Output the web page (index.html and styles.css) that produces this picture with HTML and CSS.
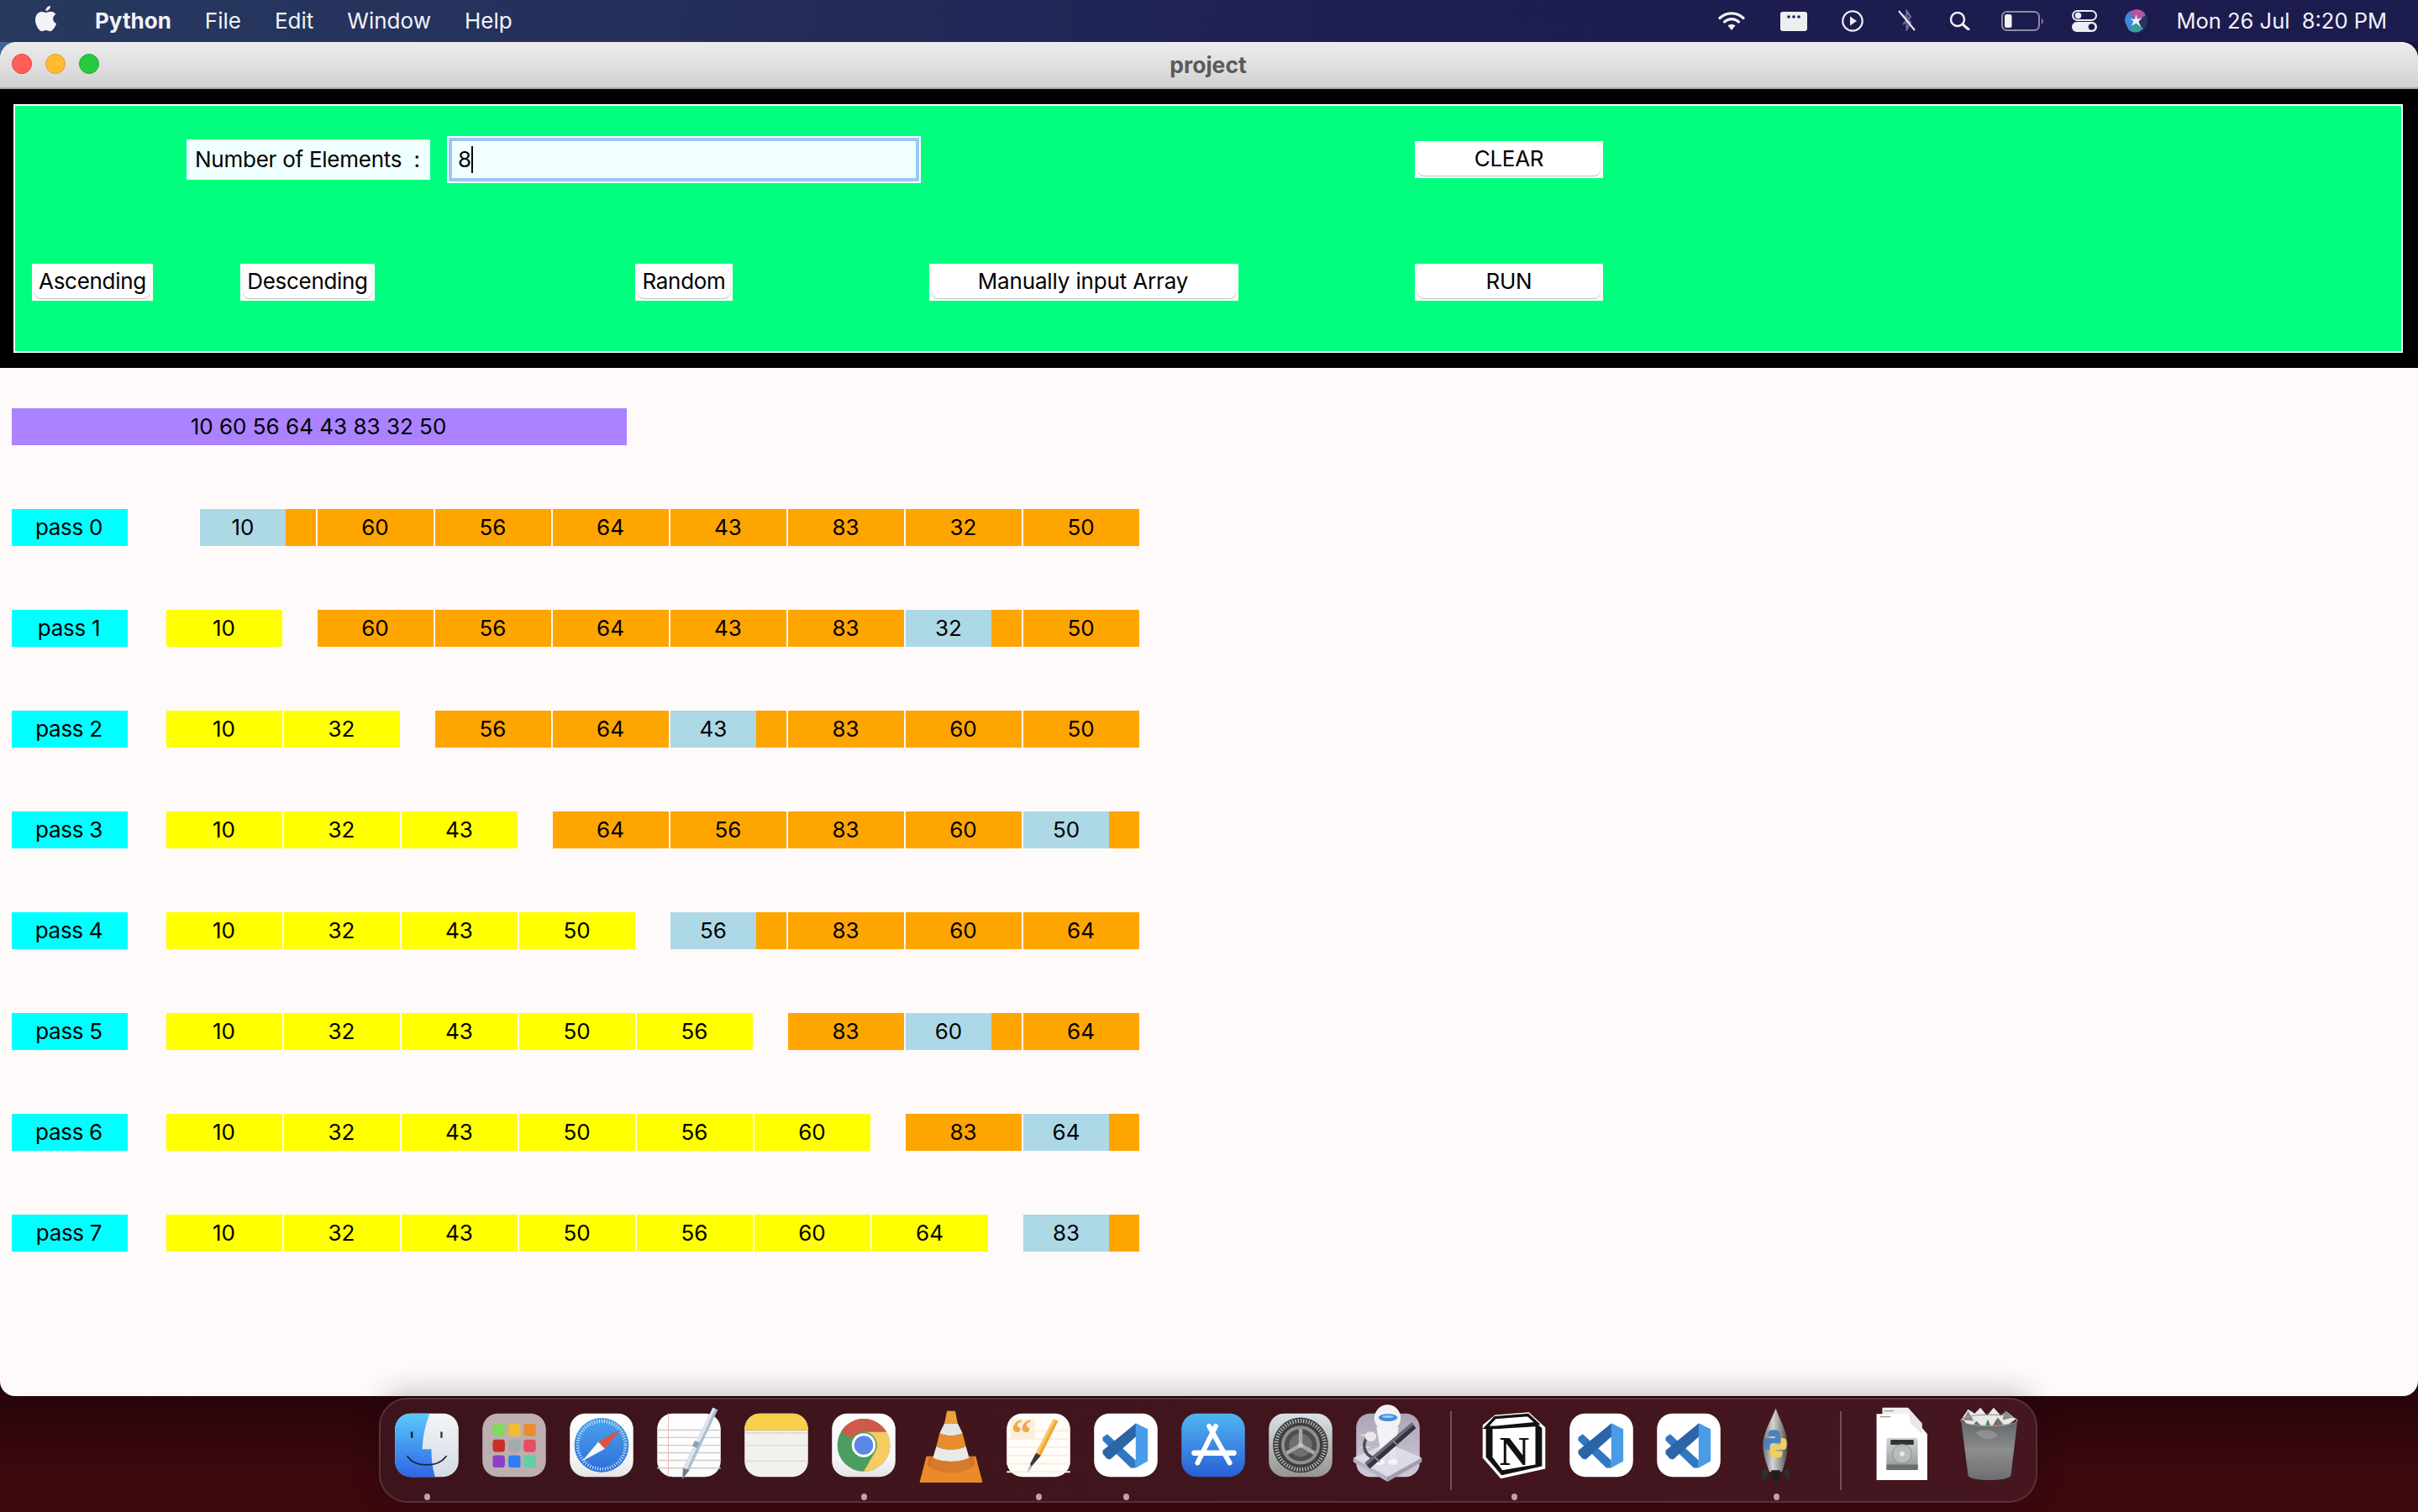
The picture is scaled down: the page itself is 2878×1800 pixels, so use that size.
FILE: index.html
```html
<!DOCTYPE html>
<html lang="en">
<head>
<meta charset="utf-8">
<title>project</title>
<link rel="stylesheet" href="styles.css">
</head>
<body>
<svg class="defs" width="0" height="0" aria-hidden="true">
  <defs>
    <linearGradient id="gFinderL" x1="0" y1="0" x2="0" y2="1"><stop offset="0" stop-color="#5ac8fb"/><stop offset="1" stop-color="#2f66e6"/></linearGradient>
    <linearGradient id="gFinderR" x1="0" y1="0" x2="0" y2="1"><stop offset="0" stop-color="#f3f5f7"/><stop offset="1" stop-color="#d3dbe6"/></linearGradient>
    <linearGradient id="gTile" x1="0" y1="0" x2="0" y2="1"><stop offset="0" stop-color="#ffffff"/><stop offset=".7" stop-color="#f6f6f6"/><stop offset="1" stop-color="#e4e4e4"/></linearGradient>
    <linearGradient id="gSafari" x1="0" y1="0" x2="0" y2="1"><stop offset="0" stop-color="#4aa3ee"/><stop offset="1" stop-color="#2d6fd8"/></linearGradient>
    <linearGradient id="gApp" x1="0" y1="0" x2="0" y2="1"><stop offset="0" stop-color="#4fb6f1"/><stop offset="1" stop-color="#2a5fd6"/></linearGradient>
    <linearGradient id="gPrefs" x1="0" y1="0" x2="0" y2="1"><stop offset="0" stop-color="#d9e2e6"/><stop offset="1" stop-color="#96958f"/></linearGradient>
    <linearGradient id="gAuto" x1="0" y1="0" x2="0" y2="1"><stop offset="0" stop-color="#aba5b6"/><stop offset="1" stop-color="#cfcad8"/></linearGradient>
    <linearGradient id="gRocket" x1="0" y1="0" x2="1" y2="0"><stop offset="0" stop-color="#6d6d6d"/><stop offset=".4" stop-color="#d5d5d5"/><stop offset=".75" stop-color="#8a8a8a"/><stop offset="1" stop-color="#4a4a4a"/></linearGradient>
    <linearGradient id="gTrash" x1="0" y1="0" x2="0" y2="1"><stop offset="0" stop-color="#65686a"/><stop offset=".5" stop-color="#8b8d8e"/><stop offset="1" stop-color="#6c6e70"/></linearGradient>
    <linearGradient id="gHdd" x1="0" y1="0" x2="0" y2="1"><stop offset="0" stop-color="#d2d5d5"/><stop offset="1" stop-color="#8f9494"/></linearGradient>
    <symbol id="vscode" viewBox="0 0 104 106">
      <rect x="13.5" y="19" width="77" height="77" rx="19" fill="#fff"/>
      <path d="M29.5 44 L64 76 V85 L58 85 L24 52 V48 Z" fill="#3277c2"/>
      <path d="M64 31 L70 34 V42 L33 75 L29 74 L24 68 V64 Z" fill="#2b65a8"/>
      <path d="M64 31 L78.6 38 V77 L64 85 Z" fill="#4a9be8"/>
    </symbol>
  </defs>
</svg>

<header class="menubar">
  <svg class="apple" width="26" height="31" viewBox="0 0 26 31"><path fill="#f2f3f6" d="M18 0c.3 3-2.600 6.200-5.600 6 -.4-3 2.800-6 5.600-6zM13 8c1.500 0 3-1.200 5.300-1.200 2.200 0 4.500 1.100 6 3.300-4.700 2.700-3.900 9.300.9 11-1.500 4-4.500 9.200-7.500 9.200-1.900 0-2.700-1.200-4.900-1.200-2.300 0-3.100 1.200-4.800 1.200C4.700 30.300 0 23 0 16.700 0 10.700 3.700 7 7.500 7 9.800 7 11.500 8 13 8z"/></svg>
  <span class="mi mi-app">Python</span>
  <span class="mi">File</span>
  <span class="mi">Edit</span>
  <span class="mi">Window</span>
  <span class="mi">Help</span>
  <div class="status">
    <svg class="s-wifi" width="32" height="24" viewBox="0 0 32 24"><g fill="none" stroke="#f2f3f6" stroke-width="3.200" stroke-linecap="round"><path d="M2 8.500C10 1 22 1 30 8.500"/><path d="M7.500 13C12.500 8.500 19.500 8.500 24.500 13"/></g><path d="M11.500 17.500C14 15.500 18 15.500 20.500 17.500L16 23Z" fill="#f2f3f6"/></svg>
    <svg class="s-cal" width="32" height="23" viewBox="0 0 32 23"><rect width="32" height="23" rx="3" fill="#eceef2"/><circle cx="10" cy="6" r="1.800" fill="#1c1b4e"/><circle cx="16" cy="6" r="1.800" fill="#1c1b4e"/><circle cx="22" cy="6" r="1.800" fill="#1c1b4e"/></svg>
    <svg class="s-play" width="26" height="26" viewBox="0 0 26 26"><circle cx="13" cy="13" r="11.700" fill="none" stroke="#eceef2" stroke-width="2.200"/><path d="M10 7.500L18 13L10 18.500Z" fill="#eceef2"/></svg>
    <svg class="s-bt" width="23" height="26" viewBox="0 0 23 26"><path d="M7 6.500L16 16L11.500 24V2L16 9L7 18" fill="none" stroke="#72718f" stroke-width="2.200"/><path d="M2 2L21 25" stroke="#eceef2" stroke-width="2"/></svg>
    <svg class="s-search" width="25" height="22" viewBox="0 0 25 22"><circle cx="10" cy="9" r="8" fill="none" stroke="#f2f3f6" stroke-width="2.400"/><path d="M16 15L23 21" stroke="#f2f3f6" stroke-width="3" stroke-linecap="round"/></svg>
    <svg class="s-batt" width="51" height="24" viewBox="0 0 51 24"><rect x="1" y="1" width="44" height="22" rx="5.500" fill="none" stroke="#8d8ca4" stroke-width="2"/><rect x="4" y="4" width="8.500" height="16" rx="2.500" fill="#f2f3f6"/><path d="M48 8.500C50 10 50.500 14 48 16Z" fill="#8d8ca4"/></svg>
    <svg class="s-cc" width="30" height="26" viewBox="0 0 30 26"><rect x="1" y="1" width="28" height="11" rx="5.500" fill="none" stroke="#eceef2" stroke-width="2"/><circle cx="7.500" cy="6.500" r="3.800" fill="#eceef2"/><rect y="14" width="30" height="12" rx="6" fill="#eceef2"/><circle cx="23.500" cy="20" r="3.800" fill="#1c1b4e"/></svg>
    <svg class="s-siri" width="27" height="28" viewBox="0 0 27 28"><ellipse cx="13.500" cy="14" rx="13.500" ry="14" fill="#27345f"/><path d="M13.500 0A13.500 14 0 0 1 25 7L13.500 14L5 3Z" fill="#b4559f"/><path d="M0 14A13.500 14 0 0 1 5 3L13.500 14L5 25Z" fill="#3f8ad8"/><path d="M5 25L13.500 14L22 23Q14 31 5 25Z" fill="#3a9b9e"/><path d="M13.500 6L15 12L21 10L16.500 14.500L19 21L13.500 16.500L8 20L10.500 14L6 11.500L12 12Z" fill="#fff" opacity=".92"/></svg>
    <span class="clock">Mon 26 Jul&nbsp; 8:20 PM</span>
  </div>
</header>

<main class="window">
  <div class="titlebar">
    <span class="light light-red"></span>
    <span class="light light-yellow"></span>
    <span class="light light-green"></span>
    <span class="title">project</span>
  </div>

  <section class="band">
    <div class="panel">
      <div class="ctl-row ctl-row-top">
        <label class="num-label">Number of Elements&nbsp; :</label>
        <div class="entry"><span class="entry-text">8</span><span class="caret"></span></div>
        <div class="btn btn-clear"><span>CLEAR</span></div>
      </div>
      <div class="ctl-row ctl-row-bottom">
        <div class="btn btn-asc"><span>Ascending</span></div>
        <div class="btn btn-desc"><span>Descending</span></div>
        <div class="btn btn-rand"><span>Random</span></div>
        <div class="btn btn-man"><span>Manually input Array</span></div>
        <div class="btn btn-run"><span>RUN</span></div>
      </div>
    </div>
  </section>

  <section class="content">
    <div class="array-bar">10 60 56 64 43 83 32 50</div>

    <div class="row"><div class="pass">pass 0</div><div class="rest">
      <div class="cell or"><b class="sw">10</b></div><div class="cell or">60</div><div class="cell or">56</div><div class="cell or">64</div><div class="cell or">43</div><div class="cell or">83</div><div class="cell or">32</div><div class="cell or">50</div>
    </div></div>

    <div class="row"><div class="pass">pass 1</div><div class="cell ye">10</div><div class="rest">
      <div class="cell or">60</div><div class="cell or">56</div><div class="cell or">64</div><div class="cell or">43</div><div class="cell or">83</div><div class="cell or"><b class="sw">32</b></div><div class="cell or">50</div>
    </div></div>

    <div class="row"><div class="pass">pass 2</div><div class="cell ye">10</div><div class="cell ye">32</div><div class="rest">
      <div class="cell or">56</div><div class="cell or">64</div><div class="cell or"><b class="sw">43</b></div><div class="cell or">83</div><div class="cell or">60</div><div class="cell or">50</div>
    </div></div>

    <div class="row"><div class="pass">pass 3</div><div class="cell ye">10</div><div class="cell ye">32</div><div class="cell ye">43</div><div class="rest">
      <div class="cell or">64</div><div class="cell or">56</div><div class="cell or">83</div><div class="cell or">60</div><div class="cell or"><b class="sw">50</b></div>
    </div></div>

    <div class="row"><div class="pass">pass 4</div><div class="cell ye">10</div><div class="cell ye">32</div><div class="cell ye">43</div><div class="cell ye">50</div><div class="rest">
      <div class="cell or"><b class="sw">56</b></div><div class="cell or">83</div><div class="cell or">60</div><div class="cell or">64</div>
    </div></div>

    <div class="row"><div class="pass">pass 5</div><div class="cell ye">10</div><div class="cell ye">32</div><div class="cell ye">43</div><div class="cell ye">50</div><div class="cell ye">56</div><div class="rest">
      <div class="cell or">83</div><div class="cell or"><b class="sw">60</b></div><div class="cell or">64</div>
    </div></div>

    <div class="row"><div class="pass">pass 6</div><div class="cell ye">10</div><div class="cell ye">32</div><div class="cell ye">43</div><div class="cell ye">50</div><div class="cell ye">56</div><div class="cell ye">60</div><div class="rest">
      <div class="cell or">83</div><div class="cell or"><b class="sw">64</b></div>
    </div></div>

    <div class="row"><div class="pass">pass 7</div><div class="cell ye">10</div><div class="cell ye">32</div><div class="cell ye">43</div><div class="cell ye">50</div><div class="cell ye">56</div><div class="cell ye">60</div><div class="cell ye">64</div><div class="rest">
      <div class="cell or"><b class="sw">83</b></div>
    </div></div>
  </section>
</main>

<nav class="dock">
  <!-- Finder -->
  <div class="slot"><svg class="ic" viewBox="0 0 104 106"><rect x="13.5" y="19" width="77" height="77" rx="19" fill="url(#gFinderR)"/><path d="M32 19H55.500C50 33 47 48 46.500 62.500H57.500C57.500 74 59 86 62 96H32.500A19 19 0 0 1 13.500 77V38A19 19 0 0 1 32 19Z" fill="url(#gFinderL)"/><rect x="32.500" y="41" width="2.600" height="8" rx="1.300" fill="#16263f"/><rect x="68.500" y="41" width="2.600" height="8" rx="1.300" fill="#3a4450"/><path d="M28.500 71C38 85 65 85 75.500 71" fill="none" stroke="#1c2433" stroke-width="1.800" stroke-linecap="round"/></svg><i class="dot"></i></div>
  <!-- Launchpad -->
  <div class="slot"><svg class="ic" viewBox="0 0 104 106"><rect x="13.5" y="19" width="77" height="77" rx="19" fill="#bdaeb0"/><rect x="26" y="31.700" width="14.700" height="15" rx="3.500" fill="#82da5c"/><rect x="45" y="31.700" width="14.700" height="15" rx="3.500" fill="#f3bd33"/><rect x="63.500" y="31.700" width="14.700" height="15" rx="3.500" fill="#e98d2e"/><rect x="26" y="50.700" width="14.700" height="15" rx="3.500" fill="#c8302a"/><rect x="45" y="50.700" width="14.700" height="15" rx="3.500" fill="#a5a9aa"/><rect x="63.500" y="50.700" width="14.700" height="15" rx="3.500" fill="#e64c64"/><rect x="26" y="69.700" width="14.700" height="15" rx="3.500" fill="#8b40c4"/><rect x="45" y="69.700" width="14.700" height="15" rx="3.500" fill="#2f7df1"/><rect x="63.500" y="69.700" width="14.700" height="15" rx="3.500" fill="#5fcfa6"/></svg></div>
  <!-- Safari -->
  <div class="slot"><svg class="ic" viewBox="0 0 104 106"><rect x="13.5" y="19" width="77" height="77" rx="19" fill="url(#gTile)"/><circle cx="52" cy="57.500" r="33" fill="url(#gSafari)"/><circle cx="52" cy="57.500" r="29" fill="none" stroke="#e6f1ff" stroke-width="4" stroke-dasharray="1 2.100"/><path d="M75 38.500L56 62L48 53.500Z" fill="#e5503c"/><path d="M28.500 77L48 53.500L56 62Z" fill="#f6f6f6"/></svg></div>
  <!-- TextEdit -->
  <div class="slot"><svg class="ic" viewBox="0 0 104 106"><rect x="13.5" y="19" width="77" height="77" rx="19" fill="#fdfdfd"/><path d="M13.500 39.300H90.500M13.500 48.300H90.500M13.500 57.700H90.500M13.500 66.700H90.500M13.500 76H90.500M13.500 85.300H90.500" stroke="#cfcbcb" stroke-width="1.500"/><path d="M27 19V96" stroke="#f2b5b8" stroke-width="1"/><path d="M81 12L87 14.500L52.500 88L44 98.500L45 85Z" fill="#a9bdd2"/><path d="M81 12L84 13.300L49 88L44 98.500L45 85Z" fill="#dbe5ef"/><path d="M45 85L52.500 88L44 98.500Z" fill="#6e7a86"/><path d="M59 52L65 54.500L62 61L56 58.500Z" fill="#8da1b6"/></svg></div>
  <!-- Notes -->
  <div class="slot"><svg class="ic" viewBox="0 0 104 106"><rect x="13.5" y="19" width="77" height="77" rx="19" fill="#f3f1ee"/><path d="M13.500 39.300V38A19 19 0 0 1 32.500 19H71.500A19 19 0 0 1 90.500 38V39.300Z" fill="#f6cf4d"/><path d="M13.500 39.300H90.500" stroke="#d9b84a" stroke-width="1"/><path d="M14 42.500H90" stroke="#c4c1bc" stroke-width="2" stroke-dasharray="1 1.200"/><path d="M13.500 57.700H90.500M13.500 77H90.500" stroke="#dcd9d6" stroke-width="1.500"/></svg></div>
  <!-- Chrome -->
  <div class="slot"><svg class="ic" viewBox="0 0 104 106"><rect x="13.5" y="19" width="77" height="77" rx="19" fill="url(#gTile)"/><circle cx="52" cy="57.500" r="32" fill="#4b9e5f"/><path d="M24.300 41.500A32 32 0 0 1 79.700 41.500H52A16 16 0 0 0 38 49.500Z" fill="#cd5a4a"/><path d="M79.700 41.500A32 32 0 0 1 52 89.500L66 65.500A16 16 0 0 0 66 49.500 16 16 0 0 0 52 41.500Z" fill="#f6cb60"/><circle cx="52" cy="57.500" r="14.500" fill="#fff"/><circle cx="52" cy="57.500" r="11.500" fill="#5b88e8"/></svg><i class="dot"></i></div>
  <!-- VLC -->
  <div class="slot"><svg class="ic" viewBox="0 0 104 106"><path d="M22 71L14 102A1 1 0 0 0 15 103H89A1 1 0 0 0 90 102L82 71Z" fill="#e98a2b"/><path d="M23 80C30 94 74 94 81 80L78 71H26Z" fill="#cf7127"/><path d="M47 16H57L60 31H44Z" fill="#eda235"/><path d="M44 31H60L66 43C58 47 46 47 38 43Z" fill="#e6e6e2"/><path d="M38 43C46 47 58 47 66 43L70 59C60 64 44 64 34 59Z" fill="#e68e2f"/><path d="M34 59C44 64 60 64 70 59L74 73C63 79 41 79 30 73Z" fill="#e9e9e5"/><path d="M30 73C41 79 63 79 74 73L77 84C65 92 39 92 27 84Z" fill="#d77a2a"/></svg></div>
  <!-- Pages-like -->
  <div class="slot"><svg class="ic" viewBox="0 0 104 106"><rect x="13.5" y="19" width="77" height="77" rx="19" fill="#fffdf9"/><path d="M13.500 40H90.500M13.500 50H90.500M13.500 60H90.500M13.500 70H90.500M13.500 80H90.500M13.500 90H90.500" stroke="#fbeedd" stroke-width="2"/><rect x="18" y="26" width="30" height="24" fill="#fbefdc"/><text class="quote" x="19" y="60">“</text><path d="M70 26L76 28L55 70L49 67Z" fill="#f0a72e"/><path d="M70 26L73 27L52 68.500L49 67Z" fill="#f8c766"/><path d="M49 67L55 70L43 84L42 80Z" fill="#3a3a3a"/><path d="M42 80L44 85L38 91Z" fill="#bbb"/></svg><i class="dot"></i></div>
  <!-- VS Code -->
  <div class="slot"><svg class="ic"><use href="#vscode"/></svg><i class="dot"></i></div>
  <!-- App Store -->
  <div class="slot"><svg class="ic" viewBox="0 0 104 106"><rect x="13.5" y="19" width="77" height="77" rx="19" fill="url(#gApp)"/><path d="M55 34.500L33 79" stroke="#fff" stroke-width="6" stroke-linecap="round"/><path d="M47 34.500L72 79" stroke="#fff" stroke-width="6" stroke-linecap="round"/><path d="M29 67H77" stroke="#fff" stroke-width="6.500" stroke-linecap="round"/></svg></div>
  <!-- System Preferences -->
  <div class="slot"><svg class="ic" viewBox="0 0 104 106"><rect x="13.5" y="19" width="77" height="77" rx="19" fill="url(#gPrefs)"/><circle cx="52" cy="57.500" r="33.500" fill="#3c3c3c"/><circle cx="52" cy="57.500" r="29.500" fill="none" stroke="#bdbdbd" stroke-width="5" stroke-dasharray="1.400 1.900"/><circle cx="52" cy="57.500" r="25.500" fill="#3f3f3f"/><circle cx="52" cy="57.500" r="23.500" fill="#8f8f8f"/><circle cx="52" cy="57.500" r="19.500" fill="#4e4e4e"/><circle cx="52" cy="57.500" r="14" fill="#6e6e6e"/><path d="M52 57.500V38M52 57.500L35 67.300M52 57.500L69 67.300" stroke="#a8a8a8" stroke-width="4.500"/><circle cx="52" cy="57.500" r="3" fill="#c6c6c6"/></svg></div>
  <!-- Automator -->
  <div class="slot"><svg class="ic" viewBox="0 0 104 106"><rect x="13.5" y="19" width="77" height="77" rx="17" fill="url(#gAuto)"/><path d="M19 45H30M19 60H30" stroke="#d9d6e0" stroke-width="2"/><path d="M10 73L51.500 96L93 73L51.500 55Z" fill="#dedbe6"/><path d="M10 73L51.500 96V102L10 78Z" fill="#b7b3c2"/><path d="M93 73L51.500 96V102L93 78Z" fill="#a29eae"/><path d="M28 46C20 56 22 68 34 73" fill="none" stroke="#4c4a55" stroke-width="3.500"/><path d="M38 36H65L60 64H43Z" fill="#f3f3f5"/><path d="M42 62H50V76H42ZM54 62H62V76H54Z" fill="#e4e4e8"/><ellipse cx="42" cy="78" rx="6" ry="3.500" fill="#f5f5f7"/><ellipse cx="58" cy="78" rx="6" ry="3.500" fill="#f5f5f7"/><circle cx="51.500" cy="24.500" r="16" fill="#f2f2f4"/><ellipse cx="52" cy="24" rx="11.500" ry="4.500" fill="#3f8ee2"/><ellipse cx="52" cy="23" rx="7" ry="1.500" fill="#a9d2f8"/><ellipse cx="31" cy="47" rx="7" ry="6" fill="#e9e9ec"/><path d="M81 30L86 37L30 86L24 79Z" fill="#34333e"/><path d="M81 30L83 33L26 82L24 79Z" fill="#6a6980"/><path d="M58 52L64 58M36 72L42 78" stroke="#8a8996" stroke-width="2"/></svg></div>
  <div class="sep"></div>
  <!-- Notion -->
  <div class="slot"><svg class="ic" viewBox="0 0 104 106"><path d="M29 21L70 17.500L90 36V86L36 98L14 73V33Z" fill="#fff"/><path d="M29 24L69 21L86 37V83L37 94L18 72V35Z" fill="#111"/><path d="M26 38L78 35V81L38 88L26 72Z" fill="#fff"/><path d="M18 36L29 24L69 21L80 31L30 36Z" fill="#fff" stroke="#111" stroke-width="3.500"/><text class="notion-n" x="52.500" y="82" text-anchor="middle">N</text></svg><i class="dot"></i></div>
  <div class="slot"><svg class="ic"><use href="#vscode"/></svg></div>
  <div class="slot"><svg class="ic"><use href="#vscode"/></svg></div>
  <!-- Python launcher -->
  <div class="slot"><svg class="ic" viewBox="0 0 104 106"><path d="M38 84C32 92 35 100 36 103L44 90ZM65 84C70 92 68 100 67 103L60 90Z" fill="#2d2d2f"/><path d="M51.500 13C58 30 66 42 66 58C66 70 62 82 59 90H44C41 82 36 70 36 58C36 42 45 30 51.500 13Z" fill="url(#gRocket)"/><path d="M46 88H57L56 101H47Z" fill="#1f1f20"/><path d="M50 39C44 39 42.500 41 42.500 44V47H51V49H41C38 49 37 53 37 56C37 60 38.500 63 41 63H44V59C44 56.500 46 55 48 55H54C56 55 57 53.500 57 51.500V44C57 41 54 39 50 39Z" fill="#4a82bc"/><path d="M52 73C58 73 59.500 71 59.500 68V65H51V63H61C64 63 65 59 65 56C65 52 63.500 49 61 49H58V53C58 55.500 56 57 54 57H48C46 57 45 58.500 45 60.500V68C45 71 48 73 52 73Z" fill="#f2cf5f"/></svg><i class="dot"></i></div>
  <div class="sep sep-b"></div>
  <!-- Document -->
  <div class="slot"><svg class="ic" viewBox="0 0 104 106"><path d="M28 12H59L76 31V60H28Z" fill="#f0f0f0"/><path d="M21 19.500H62L82.500 44V100H21Z" fill="#fff"/><path d="M59 12L76 31L76 44C70 38 66 34 62 31Z" fill="#e7e7e7"/><path d="M30 16H42M25 23H38" stroke="#999" stroke-width="1.200"/><rect x="33" y="48.700" width="38" height="39" rx="2.500" fill="url(#gHdd)"/><rect x="38" y="51" width="28" height="6" fill="#333"/><circle cx="52" cy="68" r="11.500" fill="#b9bdbd" stroke="#8b8f8f"/><circle cx="52" cy="68" r="3" fill="#e6e8e8"/><rect x="33" y="81" width="38" height="6.700" fill="#6b6e6e"/></svg></div>
  <!-- Trash -->
  <div class="slot"><svg class="ic" viewBox="0 0 104 106"><path d="M18 26L26 14L34 19L41 12L49 22L57 12L66 22L72 16L84 26L70 36H30Z" fill="#e9e9e9"/><path d="M36 28L44 36H30ZM62 24L70 34H56ZM50 26L54 36H46Z" fill="#5d7f6c"/><path d="M60 27L64 36H55Z" fill="#a55a3c"/><path d="M26 16L33 28L20 27ZM70 14L80 24L68 27Z" fill="#3a3a3a" opacity=".55"/><ellipse cx="51.500" cy="27.500" rx="34" ry="7" fill="none" stroke="#9a9c9d" stroke-width="1.500"/><path d="M17.500 28C24 37 79 37 85.800 28L78 94C77 102 27 102 26 94Z" fill="url(#gTrash)"/><path d="M35 42C45 36 60 40 62 46C55 52 42 52 35 42Z" fill="#a4a6a7" opacity=".5"/></svg></div>
</nav>
</body>
</html>
```

FILE: styles.css
```css
* { box-sizing: border-box; }
html, body { margin: 0; padding: 0; }
body {
  width: 2878px;
  height: 1800px;
  overflow: hidden;
  display: flex;
  flex-direction: column;
  background:
    linear-gradient(90deg, #3d6690 0%, #27395f 20%, #14123a 60%) 0 50px / 100% 24px no-repeat,
    linear-gradient(180deg, #27050a 1662px, #3b080e 1750px);
  font-family: "Inter", "Liberation Sans", sans-serif;
  color: #000;
}
.defs { position: absolute; }

/* menu bar */
.menubar {
  height: 50px;
  flex: none;
  display: flex;
  align-items: center;
  padding: 0 37px 0 42px;
  background: linear-gradient(90deg, #27395f 0%, #25305c 25%, #1d1d50 60%, #1c1b4e 100%);
  color: #f2f3f6;
  font-size: 26px;
}
.apple { margin-right: 45px; margin-top: -6px; }
.mi { margin-right: 40px; margin-top: -2px; }
.mi-app { font-weight: 700; }
.status { margin-left: auto; display: flex; align-items: center; }
.status svg { flex: none; }
.s-wifi { margin-right: 42px; }
.s-cal { margin-right: 41px; }
.s-play { margin-right: 40px; }
.s-bt { margin-right: 39px; margin-top: -3px; }
.s-search { margin-right: 37px; }
.s-batt { margin-right: 33px; }
.s-cc { margin-right: 33px; }
.s-siri { margin-right: 34px; }
.clock { margin-top: -2px; white-space: nowrap; font-size: 25.5px; }

/* window */
.window {
  height: 1612px;
  flex: none;
  display: flex;
  flex-direction: column;
  background: #fffafa;
  border-radius: 20px 20px 18px 18px;
  overflow: hidden;
}
.titlebar {
  height: 56px;
  flex: none;
  display: flex;
  align-items: center;
  padding: 0 0 2px 14px;
  gap: 16px;
  position: relative;
  background: linear-gradient(180deg, #ececec, #d2d2d2);
  border-bottom: 2px solid #a9a9a9;
}
.light { width: 24px; height: 24px; border-radius: 50%; }
.light-red { background: #ff5f57; border: 1px solid #e0443e; }
.light-yellow { background: #febc2e; border: 1px solid #dea123; }
.light-green { background: #28c840; border: 1px solid #1dad2b; }
.title {
  position: absolute;
  left: -2px; right: 0;
  top: 11px;
  text-align: center;
  font-size: 26.5px;
  font-weight: 700;
  color: #5a5a5a;
}

/* control band */
.band {
  flex: none;
  height: 332px;
  background: #000;
  padding: 18px 18px 18px 16px;
}
.panel {
  height: 296px;
  border: 2px solid #fff;
  background: #00ff7f;
  padding-top: 36px;
}
.ctl-row { display: flex; align-items: center; }
.ctl-row-top { height: 56px; }
.ctl-row-bottom { height: 44px; margin-top: 96px; }

.num-label {
  width: 290px;
  height: 48px;
  margin-left: 204px;
  padding: 0 0 2px 10px;
  display: flex;
  align-items: center;
  background: #f0ffff;
  font-size: 26px;
  letter-spacing: -.25px;
  white-space: nowrap;
}
.entry {
  width: 564px;
  height: 56px;
  margin-left: 20px;
  border: 2px solid #fff;
  box-shadow: inset 0 0 0 4px #9cc6f6;
  background: #f0ffff;
  display: flex;
  align-items: center;
  padding-left: 11px;
  font-size: 26px;
}
.entry-text { line-height: 32px; }
.caret { width: 2px; height: 32px; background: #000; }

.btn {
  flex: none;
  height: 44px;
  background: #fff;
  padding: 3px;
  font-size: 26px;
  letter-spacing: -.3px;
  display: flex;
}
.btn span {
  flex: 1;
  display: flex;
  align-items: center;
  justify-content: center;
  border-radius: 8px;
  background: #fff;
  box-shadow: 0 1px 1px #bdbdbd, 0 0 1px #c8c8c8;
  padding-bottom: 3px;
  white-space: nowrap;
}
.btn-clear { width: 224px; margin-left: 588px; }
.btn-asc { width: 144px; margin-left: 20px; }
.btn-desc { width: 160px; margin-left: 104px; }
.btn-rand { width: 116px; margin-left: 310px; }
.btn-man { width: 368px; margin-left: 234px; letter-spacing: -.15px; }
.btn-man span { padding-right: 2px; }
.btn-run { width: 224px; margin-left: 210px; }

/* results */
.content { flex: 1; padding: 48px 0 0 14px; font-size: 26px; }
.array-bar {
  width: 732px;
  height: 44px;
  background: #ab82ff;
  display: flex;
  align-items: center;
  justify-content: center;
  padding: 0 2px 2px 0;
  white-space: nowrap;
}
.row { display: flex; height: 44px; margin-top: 76px; }
.pass {
  width: 138px;
  height: 44px;
  margin-right: 46px;
  background: #00ffff;
  display: flex;
  align-items: center;
  justify-content: center;
  padding: 0 2px 2px 0;
  letter-spacing: -.3px;
}
.rest { display: flex; gap: 2px; margin-left: 40px; }
.cell {
  flex: none;
  width: 138px;
  height: 44px;
  display: flex;
  align-items: center;
  justify-content: center;
  padding: 0 1px 2px 0;
}
.ye { background: #ffff00; margin-right: 2px; }
.or { background: #ffa500; }
.or:has(.sw) { justify-content: flex-start; padding: 0; }
.sw {
  width: 102px;
  height: 44px;
  background: #add8e6;
  font-weight: 400;
  display: flex;
  align-items: center;
  justify-content: center;
  padding-bottom: 2px;
}

/* dock */
.dock {
  position: relative;
  flex: none;
  width: 1974px;
  height: 125px;
  margin: 2px 0 0 451px;
  padding-left: 3px;
  display: flex;
  background: linear-gradient(90deg, #3d141c, #45161f);
  border: 2px solid #5a303a;
  border-radius: 34px;
  box-shadow: 0 -8px 34px rgba(0, 0, 0, .22);
}
.slot { width: 104px; height: 121px; flex: none; display: flex; flex-direction: column; align-items: center; position: relative; }
.ic { width: 104px; height: 104px; flex: none; margin-top: -2px; overflow: visible; }
.dot { width: 7px; height: 8px; border-radius: 50%; background: #c2a0ad; margin-top: 10px; }
.sep { width: 46px; flex: none; display: flex; justify-content: center; position: relative; }
.sep::before { content: ""; width: 2px; height: 94px; margin-top: 14px; background: #7a4b58; }
.sep-b { padding-left: 4px; }
.quote { font-family: "Liberation Serif", serif; font-size: 50px; font-weight: 700; fill: #eda84a; }
.notion-n { font-family: "Liberation Serif", serif; font-size: 50px; font-weight: 700; fill: #111; }
```
